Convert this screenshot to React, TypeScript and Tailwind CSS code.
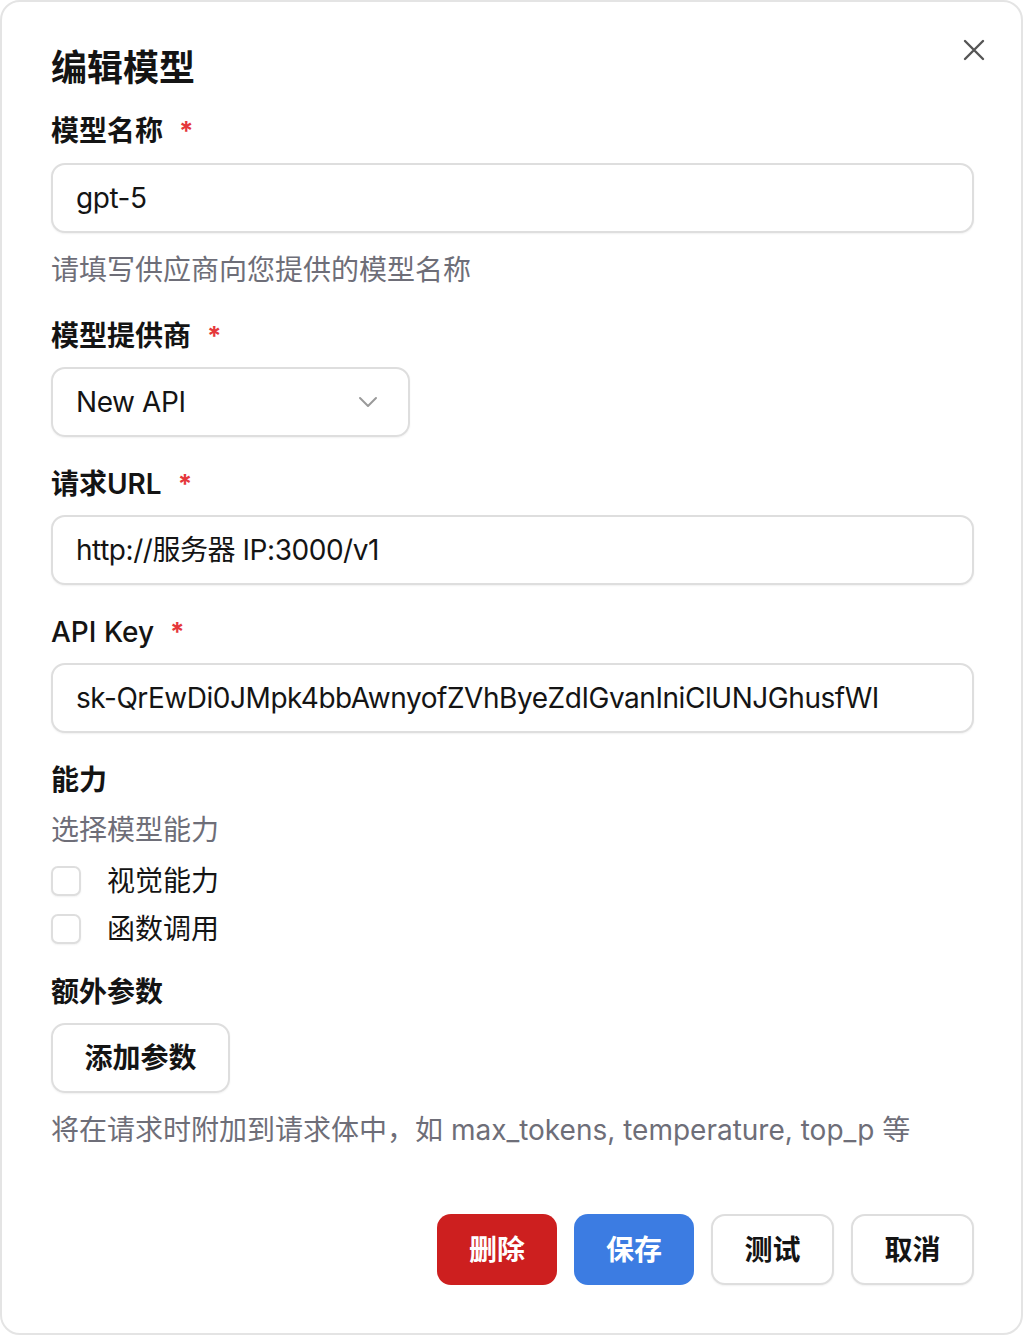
import { useState } from "react";

const FONT = "font-['Inter','Noto_Sans_CJK_SC',sans-serif]";

function Label({ text, required, weight = "font-semibold" }: { text: string; required?: boolean; weight?: string }) {
  return (
    <div className={`flex items-start text-[28px] leading-[36px] text-[#141414] ${weight}`}>
      <span>{text}</span>
      {required && <span className="ml-[16px] mt-[5px] text-[26px] leading-[26px] font-bold text-[#e5383b]">*</span>}
    </div>
  );
}

function TextInput({ value }: { value: string }) {
  return (
    <div className="h-[70px] rounded-[14px] border-2 border-[#dedede] bg-white shadow-[0_1px_2px_rgba(0,0,0,0.06)] px-[23px] flex items-center text-[28px] tracking-[-0.45px] text-[#141414]">
      {value}
    </div>
  );
}

function Check({ label }: { label: string }) {
  const [on, setOn] = useState(false);
  return (
    <label className="h-12 flex items-center cursor-pointer">
      <span
        onClick={() => setOn(!on)}
        className={`w-[30px] h-[30px] rounded-[7px] border-2 border-[#dedede] shadow-[0_1px_2px_rgba(0,0,0,0.06)] ${on ? "bg-[#3b7be2]" : "bg-white"}`}
      />
      <span className="ml-[26px] text-[28px] leading-[36px] text-[#141414]">{label}</span>
    </label>
  );
}

export default function App() {
  return (
    <div className={`${FONT} bg-white w-[1023px] h-[1336px]`}>
      <div className="relative w-full h-[1335px] border-2 border-[#e4e4e4] rounded-[20px] pl-[49px] pr-[47px] pt-[44px] flex flex-col">
        <button className="absolute right-[35px] top-[36px] w-[24px] h-[24px] flex items-center justify-center">
          <svg width="22" height="22" viewBox="0 0 22 22" fill="none" stroke="#555" strokeWidth="2.4" strokeLinecap="round">
            <path d="M2 2L20 20M20 2L2 20" />
          </svg>
        </button>

        <h2 className="text-[36px] leading-[44px] font-bold text-[#141414]">编辑模型</h2>

        <div className="mt-[23px]">
          <Label text="模型名称" required />
        </div>
        <div className="mt-[14px]">
          <TextInput value="gpt-5" />
        </div>
        <p className="mt-[19px] text-[28px] leading-[36px] text-[#6e6e78]">请填写供应商向您提供的模型名称</p>

        <div className="mt-[30px]">
          <Label text="模型提供商" required />
        </div>
        <div className="mt-[13px] w-[359px] h-[70px] rounded-[14px] border-2 border-[#dedede] shadow-[0_1px_2px_rgba(0,0,0,0.06)] pl-[23px] pr-[30px] flex items-center justify-between text-[28px] tracking-[-0.4px] text-[#141414]">
          <span>New API</span>
          <svg width="20" height="12" viewBox="0 0 20 12" fill="none" stroke="#9a9a9a" strokeWidth="2" strokeLinecap="round" strokeLinejoin="round">
            <path d="M2 2L10 10L18 2" />
          </svg>
        </div>

        <div className="mt-[29px]">
          <Label text="请求URL" required />
        </div>
        <div className="mt-[13px]">
          <TextInput value="http://服务器 IP:3000/v1" />
        </div>

        <div className="mt-[29px]">
          <Label text="API Key" required weight="font-medium" />
        </div>
        <div className="mt-[13px]">
          <TextInput value="sk-QrEwDi0JMpk4bbAwnyofZVhByeZdIGvanIniClUNJGhusfWI" />
        </div>

        <div className="mt-[29px]">
          <Label text="能力" />
        </div>
        <p className="mt-[14px] text-[28px] leading-[36px] text-[#6e6e78]">选择模型能力</p>
        <div className="mt-[9px] flex flex-col">
          <Check label="视觉能力" />
          <Check label="函数调用" />
        </div>

        <div className="mt-[21px]">
          <Label text="额外参数" />
        </div>
        <div className="mt-[13px]">
          <button className="w-[179px] h-[70px] rounded-[14px] border-2 border-[#dedede] shadow-[0_1px_2px_rgba(0,0,0,0.06)] text-[28px] font-semibold text-[#141414]">
            添加参数
          </button>
        </div>
        <p className="mt-[19px] text-[28px] leading-[36px] text-[#6e6e78]">
          将在请求时附加到请求体中，如 max_tokens, temperature, top_p 等
        </p>

        <div className="mt-[66px] flex justify-end gap-[17px]">
          <button className="w-[120px] h-[71px] rounded-[14px] bg-[#cd1f1f] text-white text-[28px] font-semibold">删除</button>
          <button className="w-[120px] h-[71px] rounded-[14px] bg-[#3c7ce2] text-white text-[28px] font-semibold">保存</button>
          <button className="w-[123px] h-[71px] rounded-[14px] border-2 border-[#dedede] bg-white shadow-[0_1px_2px_rgba(0,0,0,0.06)] text-[#141414] text-[28px] font-semibold">测试</button>
          <button className="w-[123px] h-[71px] rounded-[14px] border-2 border-[#dedede] bg-white shadow-[0_1px_2px_rgba(0,0,0,0.06)] text-[#141414] text-[28px] font-semibold">取消</button>
        </div>
      </div>
    </div>
  );
}
